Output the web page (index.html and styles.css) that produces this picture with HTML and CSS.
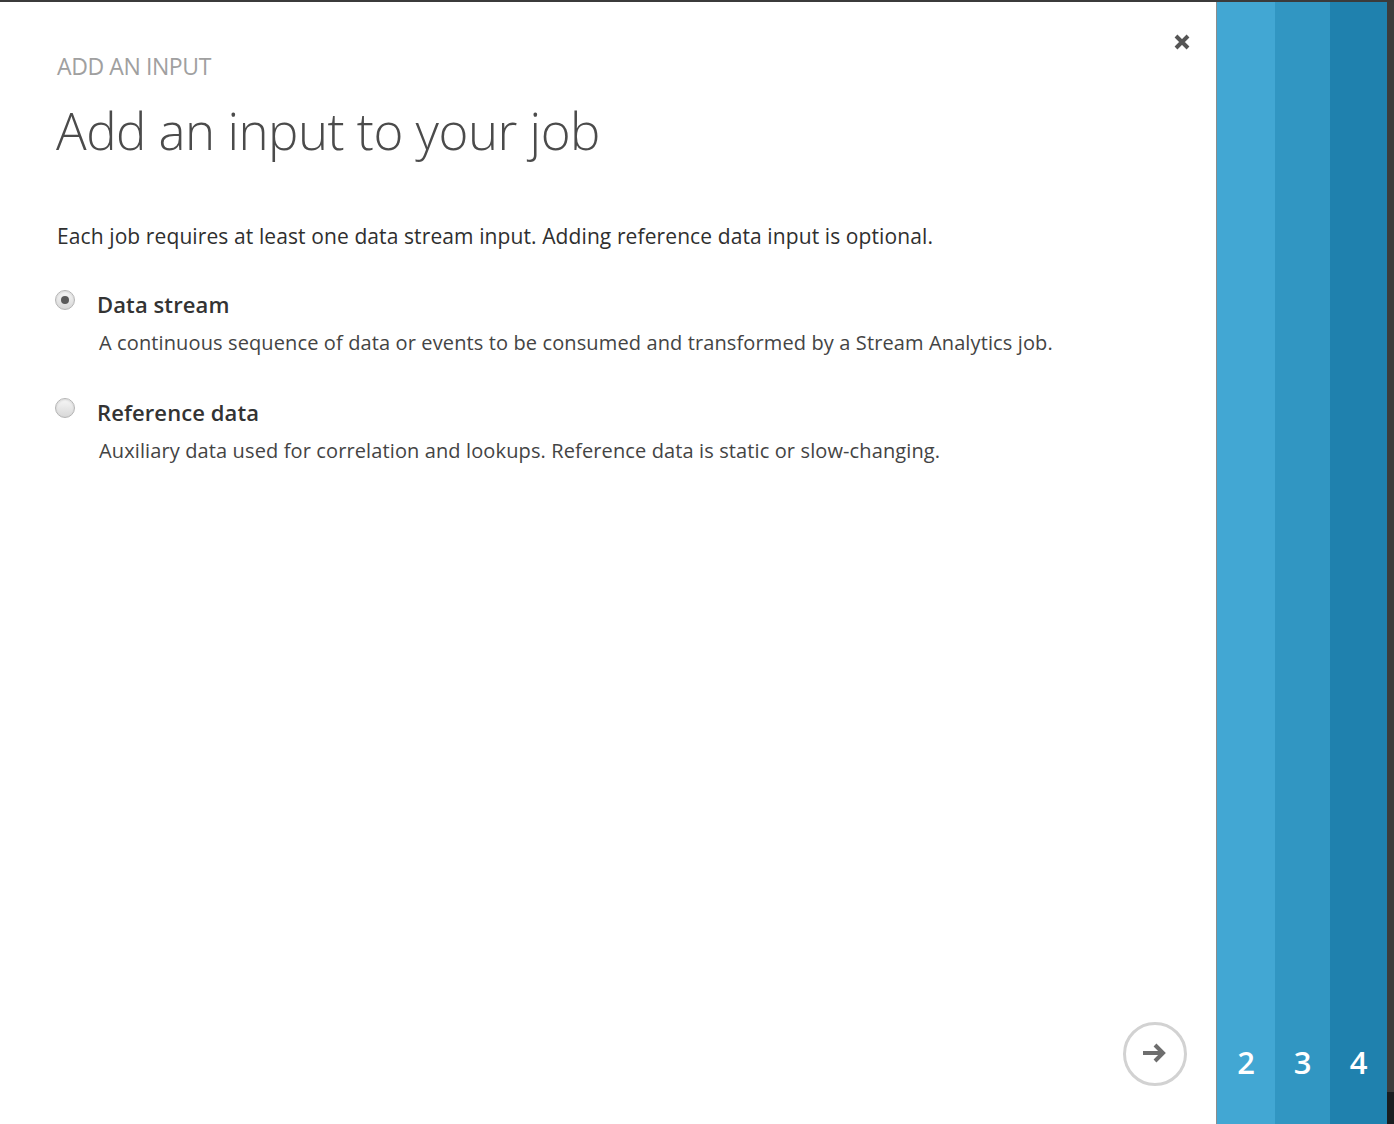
FILE: index.html
```html
<!DOCTYPE html>
<html lang="en">
<head>
<meta charset="utf-8">
<title>Add an input</title>
<link rel="stylesheet" href="styles.css">
</head>
<body>
<div class="frame">
  <div class="topbar"></div>
  <div class="row">
    <main class="dialog">
      <button class="close" aria-label="Close">
        <svg width="18" height="18" viewBox="0 0 18 18"><path d="M3 3 L15 15 M15 3 L3 15" stroke="#555" stroke-width="4" stroke-linecap="butt"/></svg>
      </button>
      <div class="eyebrow">ADD AN INPUT</div>
      <h1 class="title">Add an input to your job</h1>
      <p class="intro">Each job requires at least one data stream input. Adding reference data input is optional.</p>
      <div class="options">
        <label class="option">
          <span class="radio checked"><span class="dot"></span></span>
          <span class="option-text">
            <span class="option-title">Data stream</span>
            <span class="option-desc">A continuous sequence of data or events to be consumed and transformed by a Stream Analytics job.</span>
          </span>
        </label>
        <label class="option">
          <span class="radio"></span>
          <span class="option-text">
            <span class="option-title">Reference data</span>
            <span class="option-desc">Auxiliary data used for correlation and lookups. Reference data is static or slow-changing.</span>
          </span>
        </label>
      </div>
      <div class="footer">
        <button class="next" aria-label="Next">
          <svg width="32" height="24" viewBox="0 0 32 24"><path d="M4 12 H24 M16 4 L24 12 L16 20" stroke="#6e6e6e" stroke-width="4" fill="none" stroke-linejoin="miter"/></svg>
        </button>
      </div>
    </main>
    <aside class="steps">
      <div class="step s2"><span>2</span></div>
      <div class="step s3"><span>3</span></div>
      <div class="step s4"><span>4</span></div>
    </aside>
    <div class="edge"><div class="edge-top"></div><div class="edge-bottom"></div></div>
  </div>
</div>
</body>
</html>
```

FILE: styles.css
```css
* { box-sizing: border-box; }
html, body { margin: 0; padding: 0; height: 100%; }
body { background: #fff; font-family: "Open Sans", "Noto Sans", sans-serif; color: #333; }

.frame { display: flex; flex-direction: column; height: 1124px; width: 1394px; }
.topbar { height: 2px; background: #3b3b3b; flex: none; }
.row { flex: 1; display: flex; min-height: 0; }

.dialog {
  position: relative;
  flex: none;
  width: 1216px;
  padding: 50px 0 0 57px;
  display: flex;
  flex-direction: column;
}

.close {
  position: absolute;
  top: 31px;
  right: 25px;
  background: none;
  border: 0;
  padding: 0;
  width: 18px;
  height: 18px;
  cursor: pointer;
}

.eyebrow {
  font-size: 23px;
  font-weight: 500;
  color: #a0a0a0;
  letter-spacing: -0.4px;
  line-height: 28px;
}

.title {
  margin: 18px 0 0 -1px;
  font-weight: 300;
  font-size: 51px;
  line-height: 64px;
  color: #4b4b4b;
  letter-spacing: -0.5px;
}

.intro {
  margin: 60px 0 0;
  font-size: 21px;
  line-height: 28px;
  color: #2f2f2f;
  letter-spacing: 0.1px;
}

.options { display: flex; flex-direction: column; gap: 41px; margin-top: 40px; }
.option { display: flex; gap: 22px; align-items: flex-start; cursor: pointer; }

.radio {
  flex: none;
  width: 20px;
  height: 20px;
  margin: 0 0 0 -2px;
  border-radius: 50%;
  border: 1px solid #b5b5b5;
  background: linear-gradient(#f7f7f7, #d8d8d8);
  box-shadow: inset 0 1px 2px rgba(0,0,0,0.12);
  display: flex;
  align-items: center;
  justify-content: center;
}
.radio .dot { width: 8px; height: 8px; border-radius: 50%; background: #5a5a5a; }

.option-text { display: flex; flex-direction: column; margin-top: -1px; }
.option-title { font-size: 22px; line-height: 30px; font-weight: 600; color: #333; letter-spacing: 0.1px; }
.option-desc { font-size: 20px; line-height: 28px; margin-top: 10px; margin-left: 2px; color: #444; letter-spacing: 0.12px; }

.footer { margin-top: auto; display: flex; justify-content: flex-end; padding: 0 29px 38px 0; }
.next {
  width: 64px;
  height: 64px;
  border-radius: 50%;
  border: 3px solid #d2d2d2;
  background: #fff;
  display: flex;
  align-items: center;
  justify-content: center;
  padding: 0 0 2px;
  cursor: pointer;
}

.steps { flex: none; width: 171px; display: flex; border-left: 1px solid #8c8c8c; }
.step { display: flex; align-items: flex-end; justify-content: center; padding-bottom: 46px; color: #fff; font-size: 31px; font-weight: 600; line-height: 32px; }
.s2 { width: 58px; background: #42a7d3; }
.s3 { width: 55px; background: #3196c2; }
.s4 { width: 57px; background: #1f81ae; }

.edge { flex: none; width: 7px; display: flex; flex-direction: column; }
.edge-top { flex: 1; background: #3c3c3c; }
.edge-bottom { height: 32px; background: #1a1e21; }
```
